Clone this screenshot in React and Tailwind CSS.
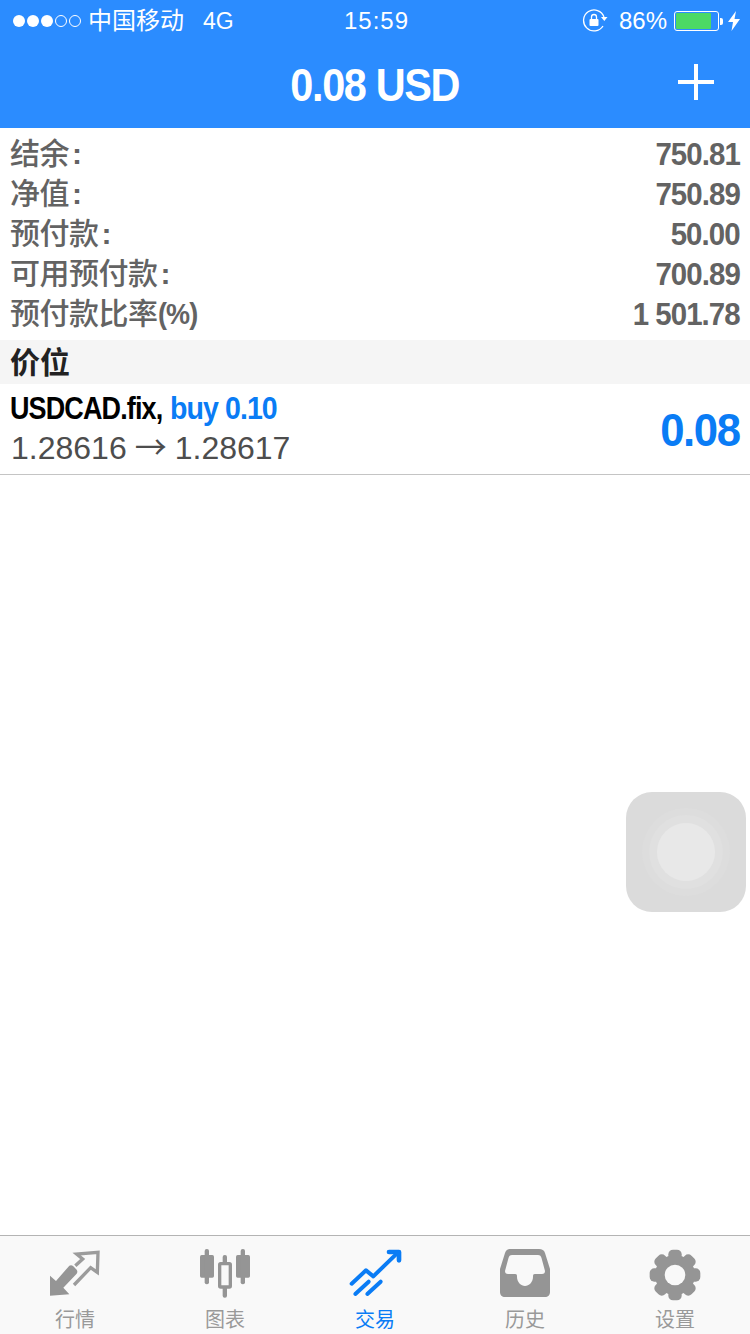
import React from 'react'

const FONT = "font-['Liberation_Sans','Noto_Sans_CJK_SC',sans-serif]"

const rows = [
  ['结余', ':', '750.81'],
  ['净值', ':', '750.89'],
  ['预付款', ':', '50.00'],
  ['可用预付款', ':', '700.89'],
  ['预付款比率', '(%)', '1 501.78'],
]

function QuotesIcon() {
  return (
    <svg width="70" height="56" viewBox="0 0 210 168">
      <path d="M30 152 L30 92 L48 108 L88 62 Q94 58 100 64 L110 74 Q114 80 110 86 L70 128 L88 148 Z" fill="#959595" />
      <path d="M106 62 L128 42 L110 27 L174 22 L172 82 L152 68 L102 120" fill="none" stroke="#9c9c9c" strokeWidth="10" />
    </svg>
  )
}

function ChartIcon() {
  return (
    <svg width="70" height="56" viewBox="0 0 210 168" fill="#959595">
      <rect x="30" y="30" width="42" height="68" rx="5" />
      <rect x="44" y="12" width="13" height="106" rx="6" />
      <rect x="138" y="30" width="42" height="68" rx="5" />
      <rect x="152" y="12" width="13" height="106" rx="6" />
      <rect x="98" y="30" width="13" height="128" rx="6" />
      <rect x="89" y="56" width="32" height="70" rx="3" fill="#f9f9f9" stroke="#959595" strokeWidth="10" />
    </svg>
  )
}

function TradeIcon() {
  return (
    <svg width="70" height="56" viewBox="0 0 210 168" fill="none" stroke="#0a7cf5" strokeWidth="12" strokeLinecap="round" strokeLinejoin="round">
      <path d="M35 116 L78 76 L100 94 L168 28" />
      <path d="M147 21 L177 21 L177 46" strokeWidth="14" />
      <path d="M46 147 L86 110" />
      <path d="M82 147 L122 110" />
    </svg>
  )
}

function HistoryIcon() {
  return (
    <svg width="50" height="48" viewBox="0 0 50 48" fill="#959595">
      <path fillRule="evenodd" d="M11 0 H39 C42 0 44 1 45 4 L50 20 V43 C50 46 48 48 45 48 H5 C2 48 0 46 0 43 V20 L5 4 C6 1 8 0 11 0 Z M12 6 C10 6 9 7 8.500 9 L5 22 C5 24 6 25 8 25 H15 C17 25 17 26 17 28 C17 33 21 37 25 37 C29 37 33 33 33 28 C33 26 33 25 35 25 H42 C44 25 45 24 45 22 L41.500 9 C41 7 40 6 38 6 Z" />
    </svg>
  )
}

function GearIcon() {
  return (
    <svg width="70" height="56" viewBox="0 0 210 168" fill="#959595">
      <circle cx="105" cy="90" r="60" />
      {[0, 45, 90, 135].map(a => (
        <rect key={a} x="85" y="14" width="40" height="152" rx="14" transform={`rotate(${a} 105 90)`} />
      ))}
      <circle cx="105" cy="90" r="31" fill="#f9f9f9" />
    </svg>
  )
}

const tabs = [
  { label: '行情', icon: <QuotesIcon /> },
  { label: '图表', icon: <ChartIcon /> },
  { label: '交易', icon: <TradeIcon />, active: true },
  { label: '历史', icon: <HistoryIcon /> },
  { label: '设置', icon: <GearIcon /> },
]

function StatusBar() {
  return (
    <div className="grid grid-cols-3 items-center h-10 text-white text-[24px] pt-[2px]">
      <div className="flex items-center pl-[13px]">
        <div className="flex gap-[2px]">
          {[0, 1, 2].map(i => <span key={i} className="w-[12px] h-[12px] rounded-full bg-white" />)}
          {[0, 1].map(i => <span key={i} className="w-[12px] h-[12px] rounded-full border border-white" />)}
        </div>
        <span className="ml-[7px] whitespace-nowrap">中国移动</span>
        <span className="ml-[19px] text-[23px]">4G</span>
      </div>
      <div className="text-center tracking-[1px] pl-[3px]">15:59</div>
      <div className="flex items-center justify-end pr-[10px]">
        <svg width="26" height="24" viewBox="0 0 26 24" fill="none" stroke="white" strokeWidth="1.300">
          <path d="M21 17 A10.500 10.500 0 1 1 22 8" />
          <path d="M19 8 H25.500 L22.300 12 Z" fill="white" stroke="none" />
          <rect x="7.500" y="10" width="9" height="7" rx="1" fill="white" stroke="none" />
          <path d="M9.500 10 V8 A2.500 2.500 0 0 1 14.500 8 V10" />
        </svg>
        <span className="ml-[11px]">86%</span>
        <div className="ml-[7px] w-[45px] h-[20px] rounded-[3px] border border-white p-[1px]">
          <div className="w-[35px] h-full bg-[#4cd964] rounded-[1px]" />
        </div>
        <div className="ml-[1px] w-[3px] h-[7px] bg-white rounded-r-[2px]" />
        <svg className="ml-[5px]" width="12" height="20" viewBox="0 0 12 20" fill="white">
          <path d="M8 0 L0 11 H5 L3.500 20 L12 8 H6.500 Z" />
        </svg>
      </div>
    </div>
  )
}

export default function App() {
  return (
    <div className={`${FONT} relative w-[750px] h-[1334px] bg-white flex flex-col overflow-hidden`}>
      {/* Header */}
      <div className="bg-[#2b8cff] h-[128px] shrink-0">
        <StatusBar />
        <div className="flex items-center justify-between h-[88px]">
          <div className="w-[100px]" />
          <div className="text-white font-bold text-[46px] tracking-[-1.5px] whitespace-nowrap scale-x-[0.9] pt-[3px]">0.08 USD</div>
          <div className="w-[100px] flex justify-end pr-[36px] pb-[4px]">
            <svg width="36" height="36" viewBox="0 0 36 36" fill="white">
              <rect x="16" y="0" width="4" height="36" />
              <rect x="0" y="16" width="36" height="4" />
            </svg>
          </div>
        </div>
      </div>

      {/* Account summary */}
      <div className="pt-[5px] pl-[10px] pr-[10px] h-[212px] shrink-0">
        {rows.map(([label, suffix, value]) => (
          <div key={label} className="flex justify-between items-center h-10 text-[#636363]">
            <span className="text-[30px] tracking-[-0.5px] font-medium">
              {label}
              <span className={`inline-block font-bold origin-left ${suffix === ':' ? 'ml-[3px]' : 'scale-x-90 tracking-[-1px]'}`}>{suffix}</span>
            </span>
            <span className="font-bold text-[31px] tracking-[-1px] origin-right scale-x-95 pt-[4px] whitespace-nowrap">{value}</span>
          </div>
        ))}
      </div>

      <div className="h-[44px] shrink-0 bg-[#f5f5f5] flex items-center pl-[10px] text-[#222222] font-bold text-[30px]">
        价位
      </div>

      {/* Open position */}
      <div className="h-[91px] shrink-0 border-b border-[#c4c4c4] flex justify-between items-center pl-[10px] pr-[10px]">
        <div className="flex flex-col pb-[10px]">
          <div className="flex font-bold text-[31px] leading-[44px] tracking-[-1px] whitespace-nowrap">
            <span className="text-black origin-left scale-x-[0.87] w-[160px]">USDCAD.fix,</span>
            <span className="text-[#0a7cf5] origin-left scale-x-[0.92]">buy 0.10</span>
          </div>
          <div className="text-[32px] leading-[28px] text-[#4d4d4d] whitespace-nowrap pl-[1px]">
            1.28616<span className="font-['Noto_Sans_CJK_SC',sans-serif] mx-[8px]">→</span>1.28617
          </div>
        </div>
        <div className="font-bold text-[46px] tracking-[-1.5px] text-[#0a7cf5] origin-right scale-x-95 pt-[3px]">0.08</div>
      </div>

      <div className="flex-1" />

      {/* Tab bar */}
      <div className="h-[99px] shrink-0 bg-[#f9f9f9] border-t border-[#b4b4b4] grid grid-cols-5">
        {tabs.map(tab => (
          <div key={tab.label} className="flex flex-col items-center">
            <div className="h-[56px] mt-[9px] flex items-center">{tab.icon}</div>
            <div className={`text-[20px] leading-[24px] mt-[7px] ${tab.active ? 'text-[#0a7cf5]' : 'text-[#999999]'}`}>{tab.label}</div>
          </div>
        ))}
      </div>

      {/* Assistive touch */}
      <div className="absolute left-[626px] top-[792px] w-[120px] h-[120px] rounded-[26px] bg-[#dbdbdb] flex items-center justify-center">
        <div className="w-[88px] h-[88px] rounded-full bg-[#dddddd] flex items-center justify-center">
          <div className="w-[74px] h-[74px] rounded-full bg-[#e0e0e0] flex items-center justify-center">
            <div className="w-[58px] h-[58px] rounded-full bg-[#e8e8e8]" />
          </div>
        </div>
      </div>
    </div>
  )
}
